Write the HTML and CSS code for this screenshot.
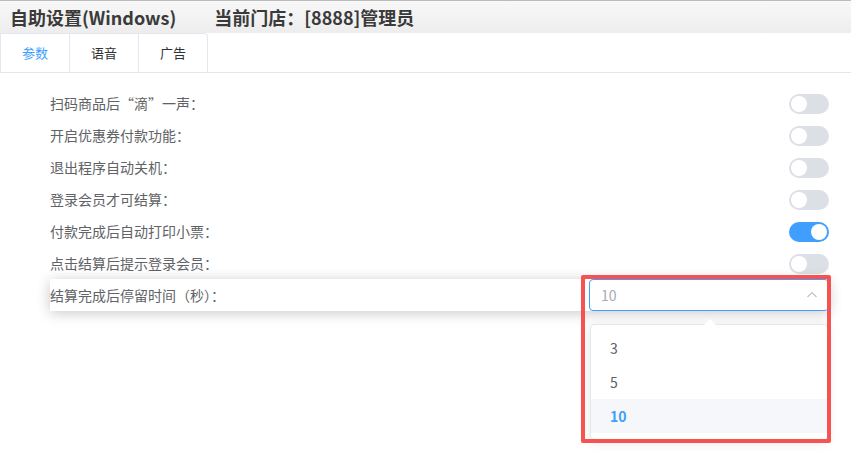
FILE: index.html
```html
<!DOCTYPE html>
<html lang="zh-CN">
<head>
  <meta charset="UTF-8" />
  <meta name="viewport" content="width=device-width, initial-scale=1" />
  <title>自助设置</title>
  <link rel="stylesheet" href="styles.css">
</head>
<body>
  <div class="header">
    <span>自助设置(Windows)</span>
    <span>当前门店：[8888]管理员</span>
  </div>

  <div class="tabs">
    <div class="tab-list">
      <div class="tab active">参数</div>
      <div class="tab">语音</div>
      <div class="tab">广告</div>
    </div>
  </div>

  <div class="form">
    <div class="row">
      <span class="label">扫码商品后“滴”一声：</span>
      <span class="switch"></span>
    </div>
    <div class="row">
      <span class="label">开启优惠券付款功能：</span>
      <span class="switch"></span>
    </div>
    <div class="row">
      <span class="label">退出程序自动关机：</span>
      <span class="switch"></span>
    </div>
    <div class="row">
      <span class="label">登录会员才可结算：</span>
      <span class="switch"></span>
    </div>
    <div class="row">
      <span class="label">付款完成后自动打印小票：</span>
      <span class="switch on"></span>
    </div>
    <div class="row">
      <span class="label">点击结算后提示登录会员：</span>
      <span class="switch"></span>
    </div>
    <div class="row row-focus">
      <span class="label">结算完成后停留时间（秒）：</span>
      <div class="select">
        <span class="select-value">10</span>
        <svg class="select-arrow" viewBox="0 0 12 12" width="12" height="12">
          <polyline points="1.5,8 6,3.5 10.5,8" fill="none" stroke="#c0c4cc" stroke-width="1.2"/>
        </svg>
        <div class="dropdown">
          <span class="dropdown-arrow"></span>
          <div class="option">3</div>
          <div class="option">5</div>
          <div class="option selected">10</div>
        </div>
      </div>
    </div>
  </div>

  <!-- annotation frame -->
  <div class="mark"></div>
</body>
</html>
```

FILE: styles.css
```css
body {
  margin: 0;
  background: #fff;
  font-family: "Noto Sans CJK SC", "Noto Sans", sans-serif;
  color: #606266;
  width: 851px;
  height: 454px;
  overflow: hidden;
  position: relative;
}
.header {
  height: 32px;
  border-top: 1px solid #bcbcbc;
  background: linear-gradient(#f8f8f8, #ededed);
  display: flex;
  align-items: center;
  gap: 38px;
  padding-left: 10px;
  font-size: 18px;
  font-weight: bold;
  color: #3a3a3a;
  line-height: 1;
}
.tabs {
  height: 39px;
  border-bottom: 1px solid #e4e7ed;
  display: flex;
}
.tab-list {
  display: flex;
  border: 1px solid #e4e7ed;
  border-bottom: none;
  border-radius: 0 4px 0 0;
}
.tab {
  width: 68px;
  line-height: 38px;
  text-align: center;
  font-size: 13px;
  color: #303133;
  border-left: 1px solid #e4e7ed;
}
.tab:first-child {
  border-left: none;
}
.tab.active {
  color: #409eff;
}
.form {
  padding-top: 14px;
}
.row {
  height: 32px;
  margin: 0 22px 0 50px;
  display: flex;
  align-items: center;
  justify-content: space-between;
  font-size: 14px;
}
.switch {
  width: 40px;
  height: 20px;
  border-radius: 10px;
  background: #dcdfe6;
  position: relative;
  margin-top: 1px;
}
.switch::after {
  content: "";
  position: absolute;
  top: 2px;
  left: 2px;
  width: 16px;
  height: 16px;
  border-radius: 50%;
  background: #fff;
}
.switch.on {
  background: #409eff;
}
.switch.on::after {
  left: 22px;
}
.row-focus {
  background: #fff;
  box-shadow: 0 2px 14px rgba(0, 0, 0, 0.22);
  position: relative;
}
.select {
  width: 240px;
  height: 32px;
  border: 1px solid #409eff;
  border-radius: 4px;
  display: flex;
  align-items: center;
  justify-content: space-between;
  padding: 0 12px 0 11px;
  box-sizing: border-box;
  position: relative;
}
.select-value {
  font-size: 14px;
  color: #a8abb2;
}
.select-arrow {
  margin-right: -2px;
}
.dropdown {
  position: absolute;
  top: 44px;
  left: 0;
  width: 238px;
  background: #fff;
  border: 1px solid #e4e7ed;
  border-radius: 4px;
  box-shadow: 0 2px 12px rgba(0, 0, 0, 0.1);
  padding: 6px 0;
  box-sizing: border-box;
}
.dropdown-arrow {
  position: absolute;
  top: -6px;
  left: 113px;
  width: 0;
  height: 0;
  border-left: 6px solid transparent;
  border-right: 6px solid transparent;
  border-bottom: 6px solid #fff;
}
.option {
  height: 34px;
  line-height: 34px;
  padding-left: 19px;
  font-size: 14px;
  color: #606266;
}
.option.selected {
  background: #f5f7fa;
  color: #409eff;
  font-weight: bold;
}
.mark {
  position: absolute;
  left: 581px;
  top: 275px;
  width: 250px;
  height: 168px;
  border: 4px solid #f75252;
  box-sizing: border-box;
  border-radius: 2px;
}
```
